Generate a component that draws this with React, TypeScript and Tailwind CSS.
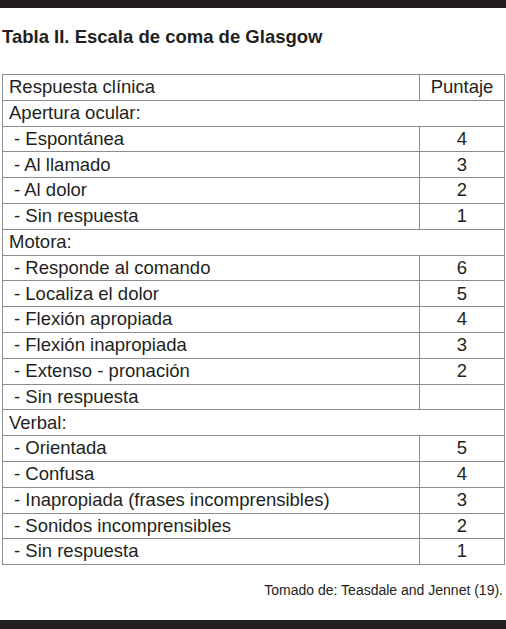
const rows: { label: string; score?: string; section?: boolean }[] = [
  { label: "Apertura ocular:", section: true },
  { label: "- Espontánea", score: "4" },
  { label: "- Al llamado", score: "3" },
  { label: "- Al dolor", score: "2" },
  { label: "- Sin respuesta", score: "1" },
  { label: "Motora:", section: true },
  { label: "- Responde al comando", score: "6" },
  { label: "- Localiza el dolor", score: "5" },
  { label: "- Flexión apropiada", score: "4" },
  { label: "- Flexión inapropiada", score: "3" },
  { label: "- Extenso - pronación", score: "2" },
  { label: "- Sin respuesta", score: "" },
  { label: "Verbal:", section: true },
  { label: "- Orientada", score: "5" },
  { label: "- Confusa", score: "4" },
  { label: "- Inapropiada (frases incomprensibles)", score: "3" },
  { label: "- Sonidos incomprensibles", score: "2" },
  { label: "- Sin respuesta", score: "1" },
];

export default function App() {
  return (
    <main
      className="relative h-[629px] w-[506px] bg-white text-[#231f20]"
      style={{ fontFamily: '"Liberation Sans", Arial, sans-serif' }}
    >
      <div className="h-[8px] bg-[#231f20]" />

      <h1 className="ml-[2px] mt-[18px] text-[18.5px] font-bold leading-[22px]">
        Tabla II. Escala de coma de Glasgow
      </h1>

      <table className="ml-[2px] mt-[26px] w-[503px] border-collapse text-[18.5px] leading-none">
        <tbody>
          <tr className="h-[25.8px]">
            <td className="border border-[#8c8c8c] pl-[6px]">Respuesta clínica</td>
            <td className="w-[85px] border border-[#8c8c8c] text-center">Puntaje</td>
          </tr>
          {rows.map((r, i) =>
            r.section ? (
              <tr key={i} className="h-[25.8px]">
                <td colSpan={2} className="border border-[#8c8c8c] pl-[6px]">
                  {r.label}
                </td>
              </tr>
            ) : (
              <tr key={i} className="h-[25.8px]">
                <td className="border border-[#8c8c8c] pl-[11px]">{r.label}</td>
                <td className="border border-[#8c8c8c] text-center">{r.score}</td>
              </tr>
            )
          )}
        </tbody>
      </table>

      <p className="mr-[3px] mt-[17px] text-right text-[14px] leading-[16px]">
        Tomado de: Teasdale and Jennet (19).
      </p>

      <div className="absolute bottom-0 left-0 h-[9px] w-full bg-[#231f20]" />
    </main>
  );
}
